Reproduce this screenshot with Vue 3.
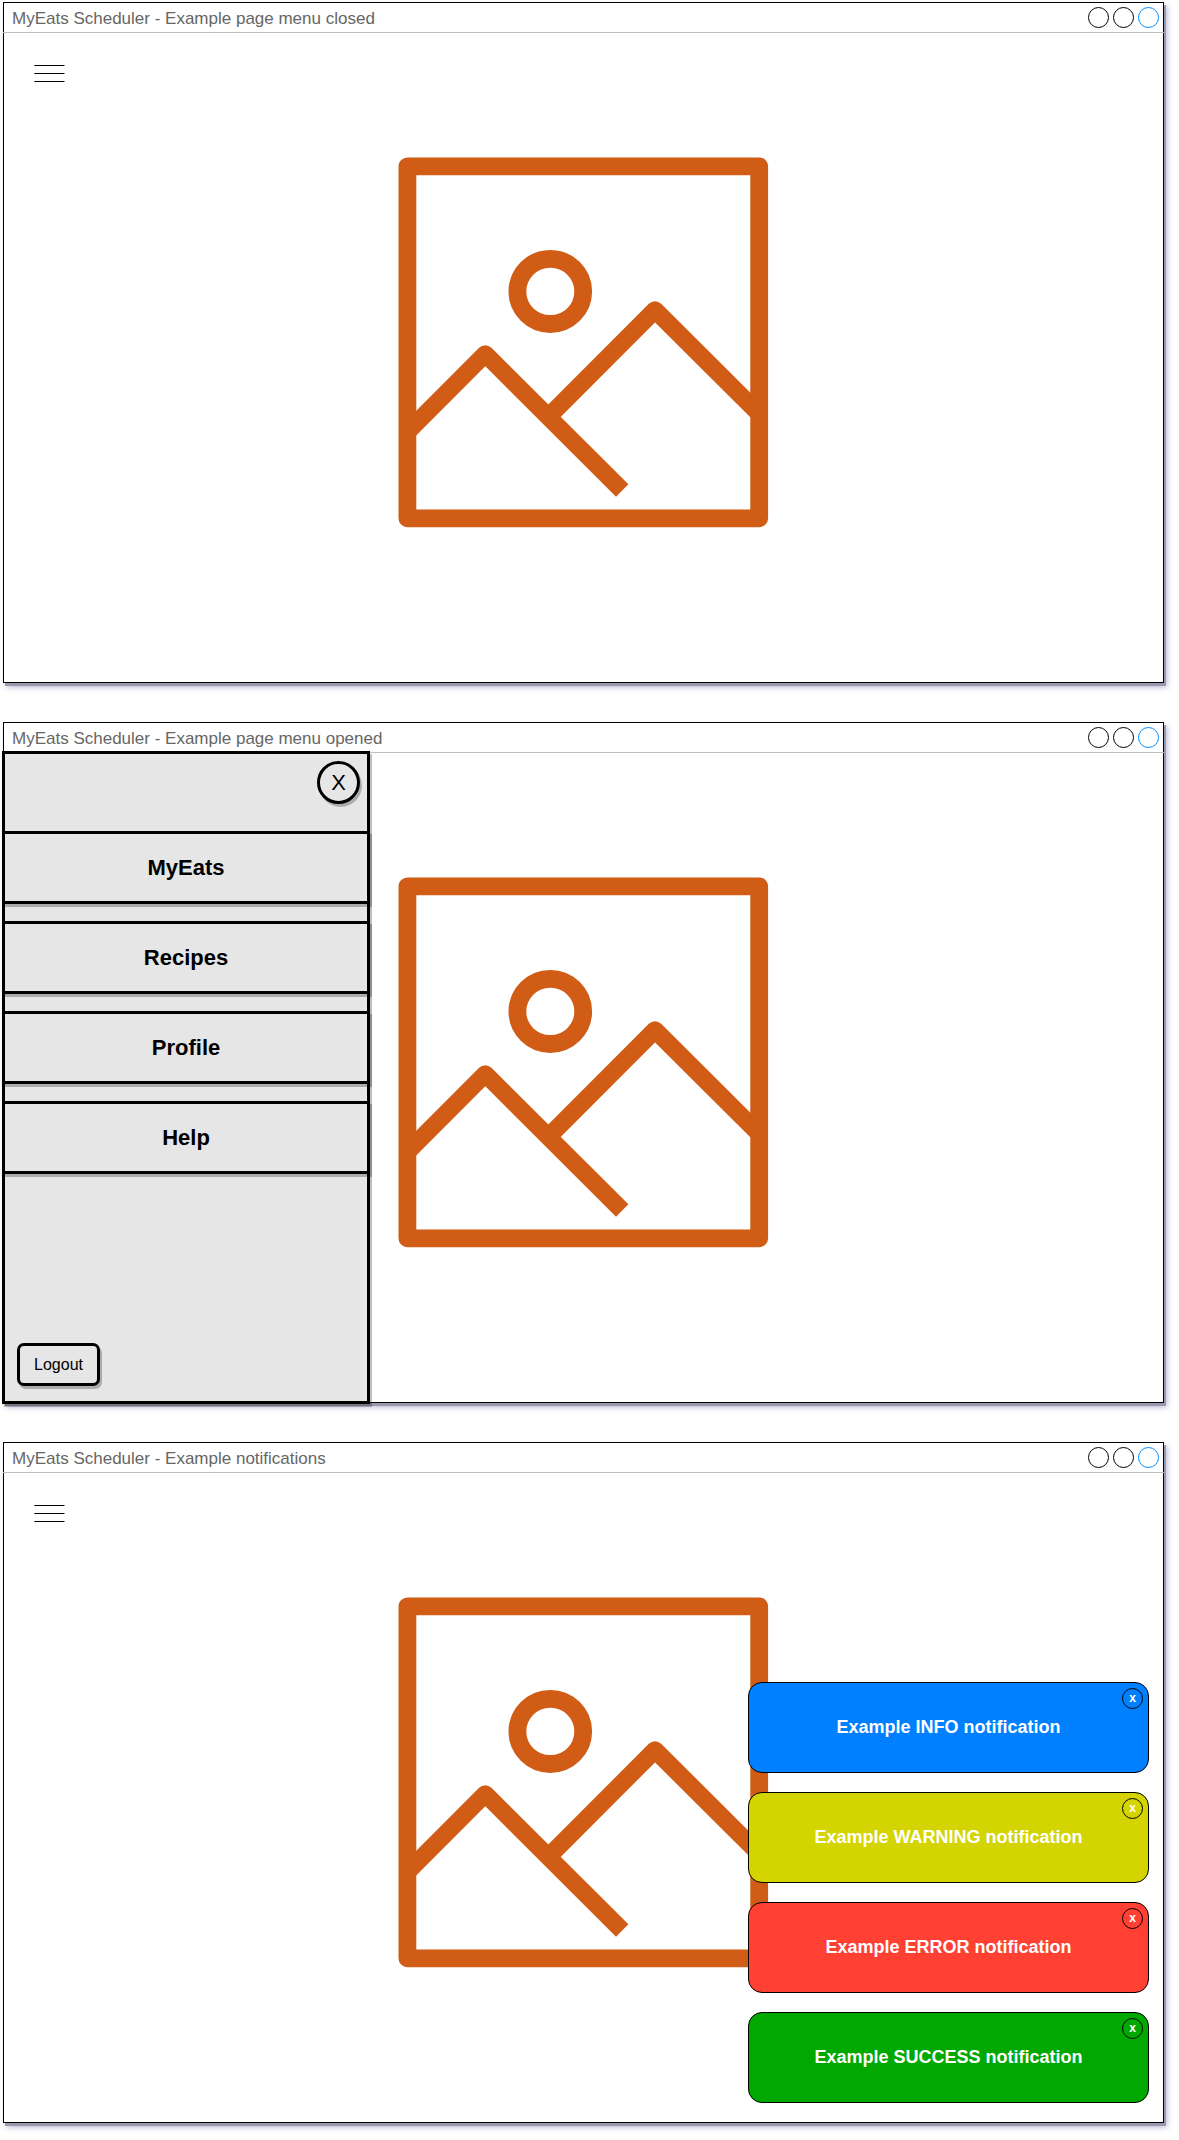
<script setup>
const windows = [
  { title: 'MyEats Scheduler - Example page menu closed', menu: 'closed', notifications: [] },
  { title: 'MyEats Scheduler - Example page menu opened', menu: 'opened', notifications: [] },
  {
    title: 'MyEats Scheduler - Example notifications',
    menu: 'closed',
    notifications: [
      { kind: 'info', text: 'Example INFO notification' },
      { kind: 'warning', text: 'Example WARNING notification' },
      { kind: 'error', text: 'Example ERROR notification' },
      { kind: 'success', text: 'Example SUCCESS notification' },
    ],
  },
]
const menuItems = ['MyEats', 'Recipes', 'Profile', 'Help']
</script>

<template>
  <div class="page">
    <section v-for="w in windows" :key="w.title" class="window">
      <header class="titlebar">
        <span class="title">{{ w.title }}</span>
        <span class="dot"></span>
        <span class="dot"></span>
        <span class="dot dot-active"></span>
      </header>

      <main class="content">
        <svg class="picture" width="390" height="385" viewBox="0 0 390 385">
          <g fill="none" stroke="#d05c15" stroke-width="17.8" stroke-linejoin="round">
            <rect x="17.4" y="16.3" width="351.8" height="352" />
            <ellipse cx="160.3" cy="141.4" rx="32.9" ry="32.6" />
            <path d="M20 279.4 L95.3 203.9 L232.2 340.5" stroke-width="17.5" />
            <path d="M160.7 264.5 L265 160 L369 263.5" stroke-width="17.5" />
          </g>
        </svg>

        <svg v-if="w.menu === 'closed'" class="burger" width="31" height="17" viewBox="0 0 31 17">
          <path d="M0.3 0.5H30.5M0.3 8.5H30.5M0.3 16.5H30.5" stroke="#000" stroke-width="1" />
        </svg>

        <nav v-else class="sidebar">
          <div class="sidebar-top"><button class="close">X</button></div>
          <a v-for="item in menuItems" :key="item" class="item">{{ item }}</a>
          <button class="logout">Logout</button>
        </nav>

        <div v-if="w.notifications.length" class="notifications">
          <div v-for="n in w.notifications" :key="n.kind" class="note" :class="n.kind">
            {{ n.text }}
            <span class="note-close">x</span>
          </div>
        </div>
      </main>
    </section>
  </div>
</template>

<style>
body {
  background: #fff;
}
</style>

<style scoped>
.page {
  box-sizing: border-box;
  width: 1179px;
  height: 2140px;
  overflow: hidden;
  padding: 2px 0 0 3px;
  display: flex;
  flex-direction: column;
  gap: 39px;
  font-family: "Liberation Sans", Arial, sans-serif;
}
.window {
  box-sizing: border-box;
  width: 1161px;
  height: 681px;
  flex: none;
  border: 1px solid #000;
  background: #fff;
  box-shadow: 2px 3px 0 #9999ab, 3px 4px 6px #b4b4d2;
}
.titlebar {
  box-sizing: border-box;
  height: 30px;
  margin: 0 -1px;
  padding: 4px 5px 0 9px;
  border-bottom: 1px solid #c0c0c0;
  display: flex;
  align-items: flex-start;
  gap: 4px;
}
.title {
  flex: 1;
  font-size: 17px;
  line-height: 19px;
  color: #666;
  white-space: nowrap;
  padding-top: 2px;
}
.dot {
  box-sizing: border-box;
  width: 21px;
  height: 21px;
  border: 1px solid #000;
  border-radius: 50%;
}
.dot-active {
  border-color: #008cff;
}
.content {
  position: relative;
  height: 649px;
  display: flex;
  align-items: flex-start;
}
.picture {
  flex: none;
  margin: 117px 0 0 386px;
}
.burger {
  position: absolute;
  left: 30px;
  top: 32px;
}
.sidebar {
  position: absolute;
  left: -2px;
  top: -2px;
  box-sizing: border-box;
  width: 368px;
  height: 653px;
  border: 3px solid #000;
  background: #e6e6e6;
  box-shadow: 2px 3px 0 rgba(0, 0, 0, 0.25);
  display: flex;
  flex-direction: column;
}
.sidebar-top {
  height: 77px;
  flex: none;
  box-sizing: border-box;
  padding: 7px 7px 0 0;
  display: flex;
  justify-content: flex-end;
}
.close,
.logout {
  box-sizing: border-box;
  height: 43px;
  padding: 0;
  border: 3px solid #000;
  background: #e6e6e6;
  box-shadow: 2px 3px 0 rgba(0, 0, 0, 0.25);
  font-family: inherit;
  color: #000;
}
.close {
  width: 43px;
  border-radius: 50%;
  font-size: 22px;
}
.item {
  box-sizing: border-box;
  height: 73px;
  flex: none;
  margin: 0 -3px 17px;
  border: 3px solid #000;
  background: #e6e6e6;
  box-shadow: 2px 3px 0 rgba(0, 0, 0, 0.25);
  display: flex;
  align-items: center;
  justify-content: center;
  font-size: 22px;
  font-weight: bold;
  color: #000;
}
.logout {
  width: 83px;
  margin: auto 0 15px 12px;
  border-radius: 7px;
  font-size: 16px;
}
.notifications {
  position: absolute;
  right: 14px;
  bottom: 19px;
  width: 401px;
  display: flex;
  flex-direction: column;
  gap: 19px;
}
.note {
  position: relative;
  box-sizing: border-box;
  height: 91px;
  border: 1px solid #000;
  border-radius: 14px;
  display: flex;
  align-items: center;
  justify-content: center;
  font-size: 18px;
  font-weight: bold;
  color: #fff;
}
.info { background: #007fff; }
.warning { background: #d4d500; }
.error { background: #ff4033; }
.success { background: #00a800; }
.note-close {
  position: absolute;
  top: 5px;
  right: 5px;
  box-sizing: border-box;
  width: 21px;
  height: 21px;
  border: 1px solid #000;
  border-radius: 50%;
  font-size: 12px;
  line-height: 18px;
  text-align: center;
}
</style>
